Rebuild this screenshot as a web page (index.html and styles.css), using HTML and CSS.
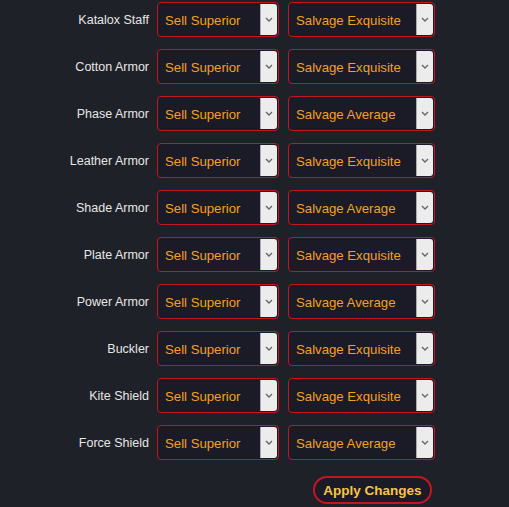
FILE: index.html
```html
<!DOCTYPE html>
<html>
<head>
<meta charset="utf-8">
<link rel="stylesheet" href="styles.css">
</head>
<body>
<div class="panel">
  <div class="row"><span class="label">Katalox Staff</span><div class="select s1"><span class="val">Sell Superior</span><span class="arrow"><svg width="8" height="5" viewBox="0 0 8 5"><path d="M1 1 L4 4 L7 1" fill="none" stroke="#666" stroke-width="1.4"/></svg></span></div><div class="select s2"><span class="val">Salvage Exquisite</span><span class="arrow"><svg width="8" height="5" viewBox="0 0 8 5"><path d="M1 1 L4 4 L7 1" fill="none" stroke="#666" stroke-width="1.4"/></svg></span></div></div>
  <div class="row"><span class="label">Cotton Armor</span><div class="select s1"><span class="val">Sell Superior</span><span class="arrow"><svg width="8" height="5" viewBox="0 0 8 5"><path d="M1 1 L4 4 L7 1" fill="none" stroke="#666" stroke-width="1.4"/></svg></span></div><div class="select s2"><span class="val">Salvage Exquisite</span><span class="arrow"><svg width="8" height="5" viewBox="0 0 8 5"><path d="M1 1 L4 4 L7 1" fill="none" stroke="#666" stroke-width="1.4"/></svg></span></div></div>
  <div class="row"><span class="label">Phase Armor</span><div class="select s1"><span class="val">Sell Superior</span><span class="arrow"><svg width="8" height="5" viewBox="0 0 8 5"><path d="M1 1 L4 4 L7 1" fill="none" stroke="#666" stroke-width="1.4"/></svg></span></div><div class="select s2"><span class="val">Salvage Average</span><span class="arrow"><svg width="8" height="5" viewBox="0 0 8 5"><path d="M1 1 L4 4 L7 1" fill="none" stroke="#666" stroke-width="1.4"/></svg></span></div></div>
  <div class="row"><span class="label">Leather Armor</span><div class="select s1"><span class="val">Sell Superior</span><span class="arrow"><svg width="8" height="5" viewBox="0 0 8 5"><path d="M1 1 L4 4 L7 1" fill="none" stroke="#666" stroke-width="1.4"/></svg></span></div><div class="select s2"><span class="val">Salvage Exquisite</span><span class="arrow"><svg width="8" height="5" viewBox="0 0 8 5"><path d="M1 1 L4 4 L7 1" fill="none" stroke="#666" stroke-width="1.4"/></svg></span></div></div>
  <div class="row"><span class="label">Shade Armor</span><div class="select s1"><span class="val">Sell Superior</span><span class="arrow"><svg width="8" height="5" viewBox="0 0 8 5"><path d="M1 1 L4 4 L7 1" fill="none" stroke="#666" stroke-width="1.4"/></svg></span></div><div class="select s2"><span class="val">Salvage Average</span><span class="arrow"><svg width="8" height="5" viewBox="0 0 8 5"><path d="M1 1 L4 4 L7 1" fill="none" stroke="#666" stroke-width="1.4"/></svg></span></div></div>
  <div class="row"><span class="label">Plate Armor</span><div class="select s1"><span class="val">Sell Superior</span><span class="arrow"><svg width="8" height="5" viewBox="0 0 8 5"><path d="M1 1 L4 4 L7 1" fill="none" stroke="#666" stroke-width="1.4"/></svg></span></div><div class="select s2"><span class="val">Salvage Exquisite</span><span class="arrow"><svg width="8" height="5" viewBox="0 0 8 5"><path d="M1 1 L4 4 L7 1" fill="none" stroke="#666" stroke-width="1.4"/></svg></span></div></div>
  <div class="row"><span class="label">Power Armor</span><div class="select s1"><span class="val">Sell Superior</span><span class="arrow"><svg width="8" height="5" viewBox="0 0 8 5"><path d="M1 1 L4 4 L7 1" fill="none" stroke="#666" stroke-width="1.4"/></svg></span></div><div class="select s2"><span class="val">Salvage Average</span><span class="arrow"><svg width="8" height="5" viewBox="0 0 8 5"><path d="M1 1 L4 4 L7 1" fill="none" stroke="#666" stroke-width="1.4"/></svg></span></div></div>
  <div class="row"><span class="label">Buckler</span><div class="select s1"><span class="val">Sell Superior</span><span class="arrow"><svg width="8" height="5" viewBox="0 0 8 5"><path d="M1 1 L4 4 L7 1" fill="none" stroke="#666" stroke-width="1.4"/></svg></span></div><div class="select s2"><span class="val">Salvage Exquisite</span><span class="arrow"><svg width="8" height="5" viewBox="0 0 8 5"><path d="M1 1 L4 4 L7 1" fill="none" stroke="#666" stroke-width="1.4"/></svg></span></div></div>
  <div class="row"><span class="label">Kite Shield</span><div class="select s1"><span class="val">Sell Superior</span><span class="arrow"><svg width="8" height="5" viewBox="0 0 8 5"><path d="M1 1 L4 4 L7 1" fill="none" stroke="#666" stroke-width="1.4"/></svg></span></div><div class="select s2"><span class="val">Salvage Exquisite</span><span class="arrow"><svg width="8" height="5" viewBox="0 0 8 5"><path d="M1 1 L4 4 L7 1" fill="none" stroke="#666" stroke-width="1.4"/></svg></span></div></div>
  <div class="row"><span class="label">Force Shield</span><div class="select s1"><span class="val">Sell Superior</span><span class="arrow"><svg width="8" height="5" viewBox="0 0 8 5"><path d="M1 1 L4 4 L7 1" fill="none" stroke="#666" stroke-width="1.4"/></svg></span></div><div class="select s2"><span class="val">Salvage Average</span><span class="arrow"><svg width="8" height="5" viewBox="0 0 8 5"><path d="M1 1 L4 4 L7 1" fill="none" stroke="#666" stroke-width="1.4"/></svg></span></div></div>
  <div class="actions"><button class="apply">Apply Changes</button></div>
</div>
</body>
</html>
```
FILE: styles.css
```css
html, body {
  margin: 0;
  padding: 0;
  background: #1f2128;
}
body {
  font-family: "Liberation Sans", Arial, sans-serif;
  width: 509px;
  height: 507px;
  overflow: hidden;
}
.panel {
  padding-top: 2px;
  display: flex;
  flex-direction: column;
  gap: 12px;
}
.row {
  display: flex;
  align-items: center;
  height: 35px;
}
.label {
  width: 149px;
  text-align: right;
  color: #e6e6e6;
  font-size: 12.5px;
  margin-right: 8px;
}
.select {
  box-sizing: border-box;
  height: 35px;
  border: 1px solid #c4161e;
  border-radius: 4px;
  background: #1b1a27;
  display: flex;
  align-items: stretch;
  padding: 1px 1px 1px 0;
}
.s1 { width: 122px; margin-right: 9px; }
.s2 { width: 147px; }
.val {
  flex: 1;
  display: flex;
  align-items: center;
  padding-left: 7px;
  padding-top: 1px;
  color: #f5a020;
  font-size: 13.2px;
}
.arrow {
  width: 16px;
  background: #ececec;
  border-left: 1px solid #aaa;
  border-radius: 0 3px 3px 0;
  display: flex;
  align-items: center;
  justify-content: center;
}
.arrow svg { display: block; }
.actions {
  display: flex;
  justify-content: flex-end;
  padding-right: 77px;
  margin-top: 4px;
}
.apply {
  box-sizing: border-box;
  width: 119px;
  height: 28px;
  border: 2px solid #c4161e;
  border-radius: 14px;
  background: #1b1a27;
  color: #f7c449;
  font-family: "Liberation Sans", Arial, sans-serif;
  font-weight: bold;
  font-size: 13.5px;
  padding: 0;
}
```
